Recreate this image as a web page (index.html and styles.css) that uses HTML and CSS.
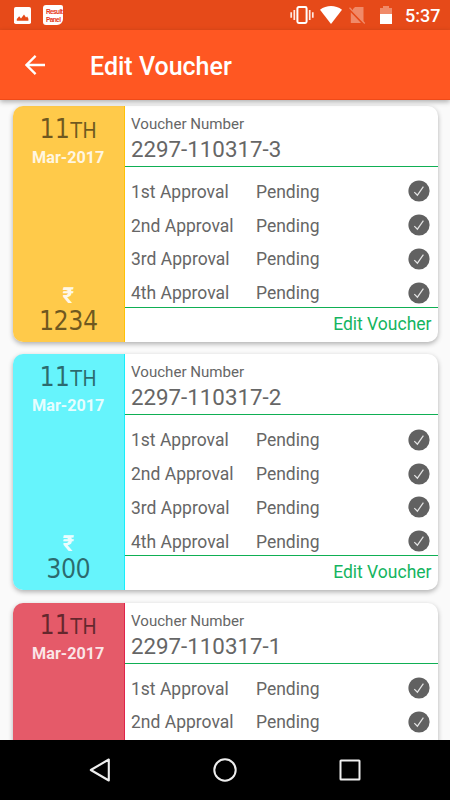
FILE: index.html
```html
<!DOCTYPE html>
<html lang="en">
<head>
    <meta charset="UTF-8">
    <meta name="viewport" content="width=device-width, initial-scale=1.0">
    <title>Edit Voucher</title>
    <link rel="stylesheet" href="styles.css">
</head>
<body>

    <div class="statusbar">
        <svg class="icon-picture" width="17" height="17" viewBox="0 0 17 17">
            <rect width="17" height="17" rx="1.8" fill="#fff"/>
            <path d="M2.8 13.8V12l2.4-2.8 1.8 2.2 3-3.8 2 3 1.2-1.2 1.2 2.3v2.1z" fill="#e64a19"/>
        </svg>
        <div class="app-badge">Result<br>Panel</div>

        <svg class="icon-vibrate" width="24" height="18" viewBox="0 0 24 18">
            <rect x="7.4" y="1" width="9.2" height="16" rx="1.4" fill="none" stroke="#fff" stroke-width="2"/>
            <path d="M4.3 4v10M19.7 4v10M1.2 6.3v5.4M22.8 6.3v5.4" stroke="#ffe9e2" stroke-width="1.7"/>
        </svg>
        <svg class="icon-wifi" width="22" height="18" viewBox="0 0 22 18">
            <path d="M0 3.7C6.5-1.2 15.5-1.2 22 3.7L11 18z" fill="#fff"/>
        </svg>
        <svg class="icon-sim" width="17" height="18" viewBox="0 0 17 18">
            <path d="M6 1h8.5v15.5L4 5.2V3zM1.8 6.3L12 17H1.8z" fill="#f08a69"/>
            <path d="M.5 1.8L15.8 17.5" stroke="#f08a69" stroke-width="1.3"/>
        </svg>
        <svg class="icon-battery" width="12" height="18" viewBox="0 0 12 18">
            <path d="M0 2h3V0h6v2h3v6H0z" fill="#f08a69"/>
            <path d="M0 8h12v10H0z" fill="#fff"/>
        </svg>
        <span class="time">5:37</span>
    </div>

    <header class="appbar">
        <svg class="icon-back" width="20" height="20" viewBox="0 0 20 20">
            <path d="M20 10H2M10.6.9L1.5 10l9.1 9.1" fill="none" stroke="#fff" stroke-width="2.3"/>
        </svg>
        <h1>Edit Voucher</h1>
    </header>

    <main id="vouchers"></main>

    <nav class="navbar">
        <svg width="24" height="26" viewBox="0 0 24 26">
            <path d="M20.8 2.5v21L2.8 13z" fill="none" stroke="#eee" stroke-width="2.1" stroke-linejoin="round"/>
        </svg>
        <svg width="24" height="26" viewBox="0 0 24 26">
            <circle cx="12" cy="13" r="10.7" fill="none" stroke="#eee" stroke-width="2"/>
        </svg>
        <svg width="24" height="26" viewBox="0 0 24 26">
            <rect x="2.5" y="3.5" width="19" height="19" rx=".5" fill="none" stroke="#eee" stroke-width="2"/>
        </svg>
    </nav>

<script>
    const all = ["1st Approval", "2nd Approval", "3rd Approval", "4th Approval"];
    const vouchers = [
        { color: "yellow", number: "2297-110317-3", amount: "1234", approvals: all },
        { color: "cyan", number: "2297-110317-2", amount: "300", approvals: all },
        { color: "red", number: "2297-110317-1", approvals: all.slice(0, 2) }
    ];

    const list = document.getElementById("vouchers");

    for (const voucher of vouchers) {
        let rows = "";
        for (const approval of voucher.approvals) {
            rows += `<li>
                <span class="approval">${approval}</span>
                <span>Pending</span>
                <svg class="check" width="22" height="22" viewBox="0 0 22 22">
                    <circle cx="11" cy="11" r="10.6" fill="#616161"/>
                    <path d="M6.3 12.1l3.1 3.1 6-8.5" fill="none" stroke="#e4e4e4" stroke-width="1.2"/>
                </svg>
            </li>`;
        }

        // amount and edit link only for vouchers with a known amount
        let amount = "";
        let edit = "";
        if (voucher.amount) {
            amount = `<div class="rupee">₹</div><div class="amount">${voucher.amount}</div>`;
            edit = `<div class="edit">Edit Voucher</div>`;
        }

        list.innerHTML += `<article class="card">
            <div class="side ${voucher.color}">
                <div class="day">11<small>TH</small></div>
                <div class="month">Mar-2017</div>
                ${amount}
            </div>
            <div class="details">
                <div class="number">
                    <div class="label">Voucher Number</div>
                    <div class="value">${voucher.number}</div>
                </div>
                <ul>${rows}</ul>
                ${edit}
            </div>
        </article>`;
    }
</script>

</body>
</html>
```

FILE: styles.css
```css
* {
    box-sizing: border-box;
}

body {
    margin: 0;
    width: 450px;
    height: 800px;
    display: flex;
    flex-direction: column;
    overflow: hidden;
    background: #fafafa;
    font-family: Roboto, "Liberation Sans", sans-serif;
    color: #666;
}

svg {
    display: block;
    flex: none;
}

.statusbar {
    height: 30px;
    flex: none;
    display: flex;
    align-items: center;
    padding: 0 10px 0 14px;
    background: #e64a19;
}

.app-badge {
    width: 20px;
    height: 20px;
    margin-left: 12px;
    padding: 3px 0 0 3px;
    border-radius: 3px 2px 6px 3px;
    background: #fff;
    color: #e5371b;
    font-family: "Liberation Sans Narrow", "Liberation Sans", sans-serif;
    font-size: 6.5px;
    font-weight: bold;
    line-height: 7.5px;
    letter-spacing: -0.6px;
}

.icon-vibrate {
    margin-left: auto;
}

.icon-wifi {
    margin-left: 6px;
}

.icon-sim {
    margin-left: 7px;
}

.icon-battery {
    margin-left: 14px;
}

.time {
    width: 35px;
    margin: 1px 0 0 13px;
    color: #fff;
    font-size: 18px;
    font-weight: 500;
}

.appbar {
    position: relative;
    height: 70px;
    flex: none;
    display: flex;
    align-items: center;
    padding-left: 25px;
    background: #ff5722;
    border-bottom: 1px solid #f04a18;
    box-shadow: 0 2px 5px rgba(0, 0, 0, 0.3);
}

h1 {
    margin: 4px 0 0 45px;
    color: #fff;
    font-size: 25px;
    font-weight: 500;
}

main {
    flex: 1;
    min-height: 0;
    overflow: hidden;
    padding: 6px 12.5px 0;
}

.card {
    display: flex;
    height: 236px;
    margin-bottom: 12.4px;
    border-radius: 10px;
    background: #fff;
    box-shadow: 0 2px 5px rgba(0, 0, 0, 0.3);
}

.side {
    width: 112.5px;
    display: flex;
    flex-direction: column;
    align-items: center;
    border-right: 1px solid;
    border-radius: 10px 0 0 10px;
}

.yellow {
    background: #ffca4a;
    border-color: #ffc107;
}

.cyan {
    background: #66f4fc;
    border-color: #18eefb;
}

.red {
    background: #e55a69;
    border-color: #e0244a;
}

.day,
.amount {
    font-family: "DejaVu Sans Condensed", "DejaVu Sans", sans-serif;
    font-stretch: condensed;
    font-size: 26.5px;
    line-height: 30px;
    letter-spacing: -0.5px;
    color: rgba(0, 0, 0, 0.57);
}

.day {
    margin-top: 7.5px;
    letter-spacing: 0.2px;
}

.day small {
    font-size: 21.5px;
}

.month {
    margin-top: 2px;
    font-size: 16.2px;
    font-weight: bold;
    line-height: 20px;
    color: rgba(255, 255, 255, 0.85);
}

.rupee {
    margin-top: auto;
    font-size: 22px;
    font-weight: bold;
    line-height: 26px;
    color: rgba(255, 255, 255, 0.9);
}

.amount {
    margin-bottom: 9px;
    line-height: 24px;
}

.details {
    flex: 1;
    display: flex;
    flex-direction: column;
}

.number {
    height: 61px;
    padding: 8px 6px 0;
    border-bottom: 1px solid #0faf54;
}

.label {
    font-size: 15.1px;
    line-height: 20px;
}

.value {
    font-size: 22.3px;
    line-height: 30px;
}

ul {
    height: 141px;
    margin: 0;
    padding: 8px 8px 0 6px;
    border-bottom: 1px solid #0faf54;
    list-style: none;
}

li {
    display: flex;
    align-items: center;
    height: 33.8px;
    font-size: 17.5px;
}

.approval {
    width: 125px;
}

.check {
    margin: -1px 0 0 auto;
}

.edit {
    padding-right: 6px;
    font-size: 17.5px;
    line-height: 33px;
    text-align: right;
    color: #14b460;
}

.navbar {
    height: 60px;
    flex: none;
    display: flex;
    align-items: center;
    justify-content: space-between;
    padding: 0 88px;
    background: #000;
}
```
